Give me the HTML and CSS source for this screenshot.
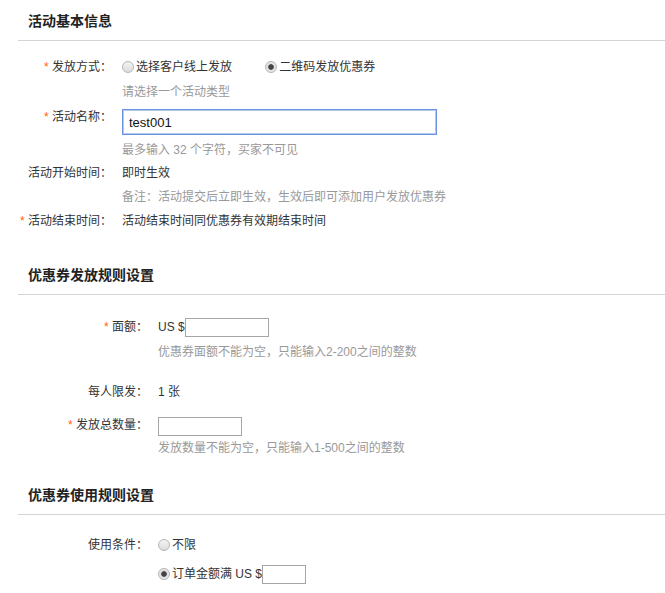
FILE: index.html
```html
<!DOCTYPE html>
<html lang="zh-CN">
<head>
    <meta charset="UTF-8">
    <meta name="viewport" content="width=device-width, initial-scale=1.0">
    <title>活动设置</title>
    <link rel="stylesheet" href="styles.css">
</head>
<body>
    <div class="section">
        <h3 class="section-title">活动基本信息</h3>
        <div class="section-body body-base">
            <div class="form-item">
                <div class="item-label"><span class="req">*</span> 发放方式：</div>
                <div class="item-content">
                    <div class="item-line">
                        <label class="radio"><input type="radio" name="way">选择客户线上发放</label>
                        <label class="radio"><input type="radio" name="way" checked>二维码发放优惠券</label>
                    </div>
                    <div class="hint">请选择一个活动类型</div>
                </div>
            </div>
            <div class="form-item item-name">
                <div class="item-label label-top"><span class="req">*</span> 活动名称：</div>
                <div class="item-content">
                    <div class="item-line"><input class="text-input name-input" type="text" value="test001"></div>
                    <div class="hint">最多输入 32 个字符，买家不可见</div>
                </div>
            </div>
            <div class="form-item item-tight">
                <div class="item-label">活动开始时间：</div>
                <div class="item-content">
                    <div class="item-line">即时生效</div>
                    <div class="hint hint-tight">备注：活动提交后立即生效，生效后即可添加用户发放优惠券</div>
                </div>
            </div>
            <div class="form-item">
                <div class="item-label"><span class="req">*</span> 活动结束时间：</div>
                <div class="item-content">
                    <div class="item-line">活动结束时间同优惠券有效期结束时间</div>
                </div>
            </div>
        </div>
    </div>

    <div class="section section-issue">
        <h3 class="section-title">优惠券发放规则设置</h3>
        <div class="section-body body-rule">
            <div class="form-item">
                <div class="item-label"><span class="req">*</span> 面额：</div>
                <div class="item-content">
                    <div class="item-line">US $<input class="text-input small-input" type="text"></div>
                    <div class="hint">优惠券面额不能为空，只能输入2-200之间的整数</div>
                </div>
            </div>
            <div class="form-item item-limit">
                <div class="item-label">每人限发：</div>
                <div class="item-content">
                    <div class="item-line">1 张</div>
                </div>
            </div>
            <div class="form-item item-total">
                <div class="item-label"><span class="req">*</span> 发放总数量：</div>
                <div class="item-content">
                    <div class="item-line"><input class="text-input small-input" type="text"></div>
                    <div class="hint hint-close">发放数量不能为空，只能输入1-500之间的整数</div>
                </div>
            </div>
        </div>
    </div>

    <div class="section section-use">
        <h3 class="section-title">优惠券使用规则设置</h3>
        <div class="section-body body-use">
            <div class="form-item">
                <div class="item-label">使用条件：</div>
                <div class="item-content">
                    <div class="item-line">
                        <label class="radio"><input type="radio" name="cond">不限</label>
                    </div>
                    <div class="item-line cond-line">
                        <label class="radio"><input type="radio" name="cond" checked>订单金额满 US $</label><input class="text-input tiny-input" type="text">
                    </div>
                </div>
            </div>
        </div>
    </div>
</body>
</html>
```

FILE: styles.css
```css
body {
    margin: 0;
    padding: 0;
    background-color: #fff;
    color: #333;
    font-family: "Liberation Sans", "Noto Sans CJK SC", sans-serif;
    font-size: 12px;
}
.section-title {
    margin: 0 0 0 18px;
    padding: 11px 0 9px 10px;
    line-height: 20px;
    font-size: 14px;
    font-weight: bold;
    color: #222;
    border-bottom: 1px solid #d4d4d4;
}
.section-issue {
    margin-top: 23px;
}
.section-use {
    margin-top: 16px;
}
.body-base {
    padding-top: 16px;
}
.body-rule {
    padding-top: 22px;
}
.body-use {
    padding-top: 20px;
}
.form-item {
    display: flex;
    align-items: flex-start;
    margin-top: 4px;
}
.section-body .form-item:first-child {
    margin-top: 0;
}
.item-label {
    flex: none;
    line-height: 20px;
    text-align: right;
    white-space: nowrap;
}
.body-base .item-label {
    width: 112px;
}
.body-rule .item-label,
.body-use .item-label {
    width: 148px;
}
.label-top {
    line-height: 16px;
}
.req {
    color: #f60;
}
.item-content {
    margin-left: 10px;
}
.item-line {
    line-height: 20px;
    white-space: nowrap;
}
.hint {
    margin-top: 5px;
    line-height: 20px;
    color: #999;
}
.hint-tight {
    margin-top: 4px;
}
.hint-close {
    margin-top: 2px;
}
.item-name {
    margin-top: 7px;
}
.item-tight {
    margin-top: 3px;
}
.item-limit {
    margin-top: 20px;
}
.item-total {
    margin-top: 13px;
}
.cond-line {
    margin-top: 9px;
}
.radio {
    display: inline-block;
}
.radio + .radio {
    margin-left: 30px;
}
.radio input {
    appearance: none;
    -webkit-appearance: none;
    width: 12px;
    height: 12px;
    margin: 0 2px 0 0;
    border: 1px solid #b5b5b5;
    border-radius: 50%;
    background: linear-gradient(#f4f4f4, #dcdcdc);
    vertical-align: -2px;
}
.radio input:checked {
    background: radial-gradient(circle, #444 0, #444 2.4px, #e2e2e2 3.2px, #ececec 100%);
}
.text-input {
    box-sizing: border-box;
    margin: 0;
    padding: 0 6px;
    border: 1px solid #a6a6a6;
    font-family: "Liberation Sans", sans-serif;
    vertical-align: middle;
    outline: none;
}
.name-input {
    width: 315px;
    height: 26px;
    font-size: 13px;
    color: #111;
    border: 1px solid #6b94dc;
    box-shadow: inset 0 0 0 1px #b3c9f0;
}
.small-input {
    width: 84px;
    height: 19px;
}
.tiny-input {
    width: 44px;
    height: 19px;
}
```
